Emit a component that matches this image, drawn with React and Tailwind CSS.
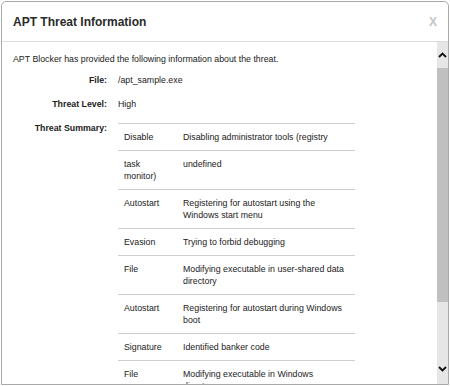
import React from "react";

const rows = [
  ["Disable", "Disabling administrator tools (registry"],
  ["task monitor)", "undefined"],
  ["Autostart", "Registering for autostart using the Windows start menu"],
  ["Evasion", "Trying to forbid debugging"],
  ["File", "Modifying executable in user-shared data directory"],
  ["Autostart", "Registering for autostart during Windows boot"],
  ["Signature", "Identified banker code"],
  ["File", "Modifying executable in Windows directory"],
];

function Chevron({ up }) {
  return (
    <svg width="9" height="6" viewBox="0 0 9 6">
      <path
        d={up ? "M1 5 L4.5 1.5 L8 5" : "M1 1 L4.5 4.5 L8 1"}
        fill="none"
        stroke="#111"
        strokeWidth="1.8"
      />
    </svg>
  );
}

export default function App() {
  return (
    <div className="w-[450px] h-[386px] bg-white overflow-hidden font-['Liberation_Sans',Arial,sans-serif]">
      <div className="ml-[1px] mt-[1px] w-[448px] h-[384px] border border-[#a9a9a9] rounded-t-[5px] flex flex-col overflow-hidden">
        <div className="h-[40px] shrink-0 border-b border-[#dcdcdc] flex items-center justify-between pl-[11px] pr-[11px]">
          <div className="text-[12px] font-bold text-[#2a2a2a] leading-none">APT Threat Information</div>
          <div className="text-[12px] font-bold text-[#c4c4c4] leading-none">X</div>
        </div>
        <div className="flex flex-1 min-h-0">
          <div className="flex-1 min-w-0 overflow-hidden pl-[11px] pt-[11px] text-[8.8px] leading-[12px] text-[#222]">
            <p>APT Blocker has provided the following information about the threat.</p>
            <div className="mt-[9px] flex">
              <div className="w-[94px] text-right font-bold">File:</div>
              <div className="ml-[11px]">/apt_sample.exe</div>
            </div>
            <div className="mt-[12px] flex">
              <div className="w-[94px] text-right font-bold">Threat Level:</div>
              <div className="ml-[11px]">High</div>
            </div>
            <div className="mt-[12px] flex items-start">
              <div className="w-[94px] text-right font-bold">Threat Summary:</div>
              <div className="ml-[11px] mt-[1px] w-[237px] border-t border-[#cfcfcf]">
                {rows.map((r, i) => (
                  <div key={i} className="flex border-b border-[#cfcfcf]">
                    <div className="w-[59px] shrink-0 px-[6px] py-[7px]">{r[0]}</div>
                    <div className="flex-1 px-[6px] py-[7px]">{r[1]}</div>
                  </div>
                ))}
              </div>
            </div>
          </div>
          <div className="w-[11px] shrink-0 bg-[#e6e6e6] flex flex-col">
            <div className="h-[26px] flex items-center justify-center">
              <Chevron up />
            </div>
            <div className="h-[234px] bg-[#c0c0c0]" />
            <div className="flex-1 flex items-end justify-center pb-[12px]">
              <Chevron />
            </div>
          </div>
        </div>
      </div>
    </div>
  );
}
